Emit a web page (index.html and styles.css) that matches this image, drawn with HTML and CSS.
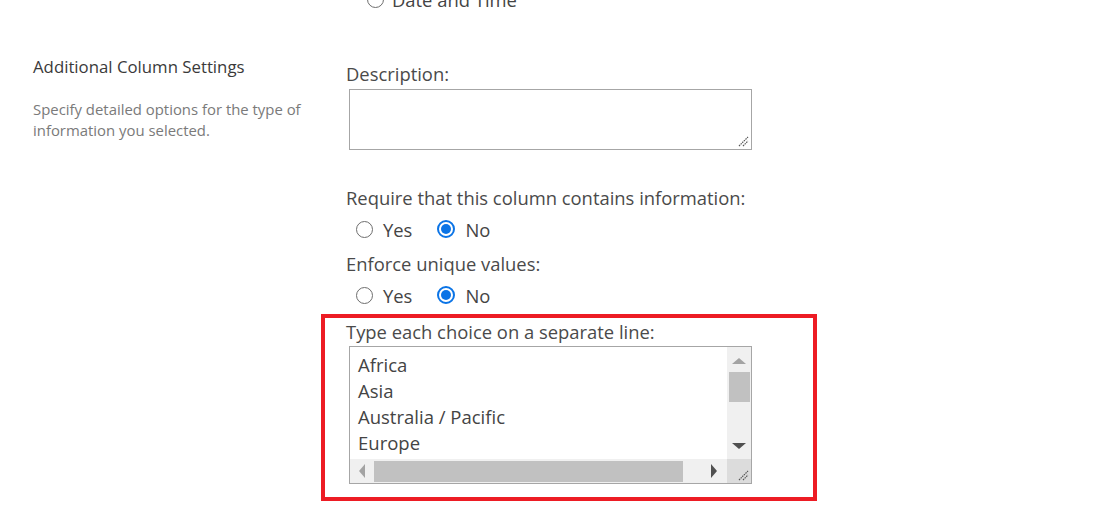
FILE: index.html
```html
<!DOCTYPE html>
<html>
<head>
<meta charset="utf-8">
<link rel="stylesheet" href="styles.css">
</head>
<body>
<div class="page">
  <div class="prev-row">
    <span class="radio"></span><span class="opt-label">Date and Time</span>
  </div>
  <div class="section">
    <div class="side">
      <div class="side-title">Additional Column Settings</div>
      <div class="side-desc">Specify detailed options for the type of information you selected.</div>
    </div>
    <div class="fields">
      <div class="label label-desc">Description:</div>
      <div class="textbox desc-box"><span class="grip"><svg width="11" height="11" viewBox="0 0 11 11"><path d="M1 10 L10 1 M5 10 L10 5" stroke="#555" stroke-width="1.2" stroke-dasharray="1.5 0.8"/></svg></span></div>
      <div class="label label-req">Require that this column contains information:</div>
      <div class="radio-row">
        <span class="radio"></span><span class="opt-label">Yes</span>
        <span class="radio checked"></span><span class="opt-label">No</span>
      </div>
      <div class="label label-uniq">Enforce unique values:</div>
      <div class="radio-row">
        <span class="radio"></span><span class="opt-label">Yes</span>
        <span class="radio checked"></span><span class="opt-label">No</span>
      </div>
      <div class="highlight">
        <div class="label label-choice">Type each choice on a separate line:</div>
        <div class="choices">
          <div class="choices-main">
            <div class="choices-text">
              <div>Africa</div>
              <div>Asia</div>
              <div>Australia / Pacific</div>
              <div>Europe</div>
            </div>
            <div class="vscroll">
              <span class="arrow up"></span>
              <span class="vthumb"></span>
              <span class="vspace"></span>
              <span class="arrow down"></span>
            </div>
          </div>
          <div class="hbar">
            <div class="hscroll">
              <span class="arrow left"></span>
              <span class="hthumb"></span>
              <span class="hspace"></span>
              <span class="arrow right"></span>
            </div>
            <div class="corner"><svg width="11" height="11" viewBox="0 0 11 11"><path d="M1 10 L10 1 M5 10 L10 5" stroke="#555" stroke-width="1.2" stroke-dasharray="1.5 0.8"/></svg></div>
          </div>
        </div>
      </div>
    </div>
  </div>
</div>
</body>
</html>
```

FILE: styles.css
```css
html, body {
  margin: 0;
  padding: 0;
  background: #fff;
}
body {
  font-family: "Open Sans", "Noto Sans", sans-serif;
  color: #444;
}
.page {
  width: 1117px;
  height: 512px;
  overflow: hidden;
  position: relative;
}
.prev-row {
  display: flex;
  align-items: center;
  margin-top: -12px;
  padding-left: 367px;
  height: 22px;
  font-size: 18.4px;
  color: #444;
}
.prev-row .radio {
  margin-right: 8px;
}
.section {
  display: flex;
  margin-top: 47px;
}
.side {
  width: 346px;
  padding-left: 33px;
  box-sizing: border-box;
  flex: none;
}
.side-title {
  font-size: 16.8px;
  line-height: 20px;
  color: #3a3a3a;
}
.side-desc {
  font-size: 14.9px;
  line-height: 21px;
  color: #7a7a7a;
  margin-top: 22px;
  width: 300px;
}
.fields {
  display: flex;
  flex-direction: column;
  align-items: flex-start;
  width: 480px;
}
.label {
  font-size: 18.4px;
  line-height: 24px;
  height: 24px;
  color: #4a4a4a;
  white-space: nowrap;
}
.label-desc {
  margin-top: 5px;
}
.textbox {
  width: 403px;
  height: 61px;
  border: 1px solid #a6a6a6;
  box-sizing: border-box;
  margin-left: 3px;
  margin-top: 3px;
  position: relative;
}
.grip {
  position: absolute;
  right: 2px;
  bottom: 2px;
  line-height: 0;
}
.label-req {
  margin-top: 36px;
}
.radio-row {
  display: flex;
  align-items: center;
  height: 28px;
  padding-left: 10px;
  margin-top: 5px;
  font-size: 18.4px;
  color: #444;
}
.radio {
  display: inline-block;
  width: 17px;
  height: 17px;
  box-sizing: border-box;
  border: 1px solid #6e6e6e;
  border-radius: 50%;
  flex: none;
  position: relative;
}
.radio.checked {
  border: 2px solid #0b74e6;
  width: 18px;
  height: 18px;
}
.radio.checked::after {
  content: "";
  position: absolute;
  left: 2px;
  top: 2px;
  width: 10px;
  height: 10px;
  border-radius: 50%;
  background: #0b74e6;
}
.radio-row .opt-label {
  margin-left: 10px;
  margin-right: 25px;
}
.label-uniq {
  margin-top: 9px;
}
.highlight {
  margin-left: -25px;
  margin-top: 5px;
  width: 496px;
  height: 187px;
  box-sizing: border-box;
  border: 4px solid #ed1c24;
  padding-left: 21px;
  padding-top: 2px;
}
.label-choice {
  line-height: 24px;
}
.choices {
  width: 403px;
  height: 138px;
  border: 1px solid #a6a6a6;
  box-sizing: border-box;
  margin-left: 3px;
  margin-top: 2px;
  display: flex;
  flex-direction: column;
}
.choices-main {
  display: flex;
  flex: 1;
  min-height: 0;
}
.choices-text {
  flex: 1;
  padding-left: 8px;
  padding-top: 5px;
  font-size: 18.5px;
  line-height: 26px;
  color: #444;
}
.vscroll {
  width: 24px;
  background: #f0f0f0;
  display: flex;
  flex-direction: column;
  align-items: center;
}
.vthumb {
  width: 21px;
  height: 30px;
  background: #c1c1c1;
}
.vspace {
  flex: 1;
}
.arrow {
  display: block;
  width: 0;
  height: 0;
}
.arrow.up {
  margin-top: 11px;
  margin-bottom: 8px;
  border-left: 7px solid transparent;
  border-right: 7px solid transparent;
  border-bottom: 6px solid #a3a3a3;
}
.arrow.down {
  margin-bottom: 10px;
  border-left: 7px solid transparent;
  border-right: 7px solid transparent;
  border-top: 6px solid #505050;
}
.hbar {
  display: flex;
  height: 24px;
}
.hscroll {
  flex: 1;
  background: #f0f0f0;
  display: flex;
  align-items: center;
}
.arrow.left {
  margin-left: 9px;
  margin-right: 9px;
  border-top: 7px solid transparent;
  border-bottom: 7px solid transparent;
  border-right: 6px solid #a3a3a3;
}
.hthumb {
  width: 309px;
  height: 21px;
  background: #c1c1c1;
}
.hspace {
  flex: 1;
}
.arrow.right {
  margin-right: 10px;
  border-top: 7px solid transparent;
  border-bottom: 7px solid transparent;
  border-left: 6px solid #505050;
}
.corner {
  width: 24px;
  background: #dcdcdc;
  display: flex;
  align-items: flex-end;
  justify-content: flex-end;
  padding: 0 2px 2px 0;
  box-sizing: border-box;
}
```
